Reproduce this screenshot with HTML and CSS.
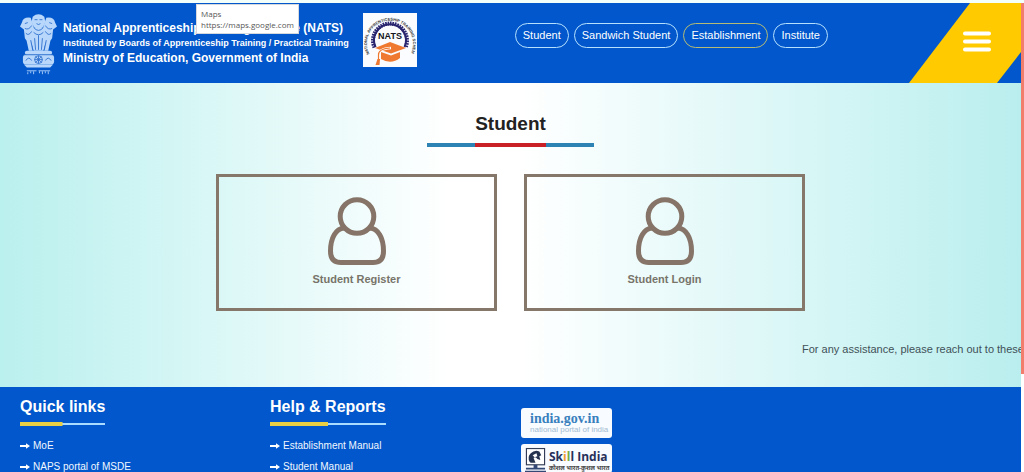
FILE: index.html
```html
<!DOCTYPE html>
<html lang="en">
<head>
<meta charset="utf-8">
<title>NATS - Student</title>
<link rel="stylesheet" href="styles.css">
</head>
<body>
<svg class="symbols" aria-hidden="true">
  <symbol id="user" viewBox="0 0 58 68">
    <circle cx="29" cy="19.500" r="16.800"/>
    <path d="M16 31C8 31.500 2.500 41 2.500 54Q2.500 65.500 13 65.500H45Q55.500 65.500 55.500 54C55.500 41 50 31.500 42 31"/>
  </symbol>
  <symbol id="arrow" viewBox="0 0 10 8">
    <path d="M0 3H6V1.200L10 4L6 6.800V5H0Z"/>
  </symbol>
</svg>
<div class="page">
  <div class="site">
    <header class="header">
      <a class="brand" href="#">
        <svg class="emblem" viewBox="0 0 38 64" role="img" aria-label="State Emblem of India">
          <g fill="#b9d7fb">
            <path d="M13 3Q19-2 25 3L26 8Q25 14 19 16Q13 14 12 8Z"/>
            <path d="M11 4Q3 3 2 9L0 13L4 16L5 25Q8 31 12 25L15 16Z"/>
            <path d="M27 4Q35 3 36 9L38 13L34 16L33 25Q30 31 26 25L23 16Z"/>
            <path d="M12 14L26 14L27 27L24 38H14L11 27Z"/>
            <path d="M6 24H11L13 38H9ZM32 24H27L25 38H29Z"/>
            <rect x="5" y="38" width="28" height="4" rx="2"/>
            <rect x="3" y="42" width="32" height="10" rx="3"/>
            <path d="M4 52H34L31 55H7Z"/>
          </g>
          <g fill="none" stroke="#2d6fce" stroke-width=".9">
            <path d="M15 6H18M20 6H23M17 10Q19 12 21 10M14 14Q19 20 24 14M14 19Q19 24 24 19M15 25L16 37M19 22V37M23 25L22 37M5 10L8 9M33 10L30 9M5 15Q9 17 12 12M33 15Q29 17 26 12M6 20Q9 23 12 18M32 20Q29 23 26 18M11 27L13 37M27 27L25 37M4 42H34"/>
            <circle cx="19" cy="47" r="4"/>
            <path d="M15 47H23M19 43V51M16 44L22 50M22 44L16 50M6 48Q9 43 12 48M26 48Q29 43 32 48"/>
          </g>
          <path d="M7 58.500H17M19 58.500H31M8 60V62M11 59V61M14 59V62M20 59V61M23 59V62M26 59V61M29 59V62" stroke="#a6cbfa" stroke-width="1" fill="none"/>
        </svg>
        <span class="brand-text">
          <span class="brand-line">National Apprenticeship Training Scheme (NATS)</span>
          <span class="brand-line brand-small">Instituted by Boards of Apprenticeship Training / Practical Training</span>
          <span class="brand-line">Ministry of Education, Government of India</span>
        </span>
        <svg class="nats" viewBox="0 0 54 54" role="img" aria-label="NATS">
          <rect width="54" height="54" fill="#fafcff"/>
          <defs><path id="ring" d="M6.500 41A23 23 0 1 1 47.500 41"/></defs>
          <text class="ring-text"><textPath href="#ring">NATIONAL APPRENTICESHIP TRAINING SCHEME</textPath></text>
          <path d="M11.500 34.500A17 17 0 1 1 42.500 34.500" fill="none" stroke="#29256f" stroke-width="4" stroke-dasharray="1.600 .8"/>
          <path d="M12.500 34A16 16 0 1 1 41.500 34" fill="none" stroke="#29256f" stroke-width="2"/>
          <text class="nats-text" x="27" y="26">NATS</text>
          <path d="M12 35L27 29L43 35L28 40.500Z" fill="#ef7930"/>
          <path d="M18 39L28 42.500L37 39V45Q28 52 18 46Z" fill="#ef7930"/>
          <path d="M28 35Q15 36 15.500 42V47" fill="none" stroke="#fff" stroke-width="2.400"/>
          <path d="M27 35Q15 36 15.500 42V47" fill="none" stroke="#ef7930" stroke-width="1.200"/>
          <path d="M14.500 46H17L16.500 52H12.500Z" fill="#ef7930"/>
        </svg>
      </a>
      <nav class="nav" aria-label="Main">
        <a href="#">Student</a>
        <a href="#">Sandwich Student</a>
        <a class="active" href="#">Establishment</a>
        <a href="#">Institute</a>
      </nav>
      <button class="menu" type="button" aria-label="Menu">
        <svg viewBox="0 0 28 21"><path d="M2 2.500H26M2 10.500H26M2 18.500H26"/></svg>
      </button>
      <div class="link-tip" role="tooltip">Maps<br>https://maps.google.com</div>
    </header>
    <main class="main">
      <h1>Student</h1>
      <div class="cards">
        <a class="card" href="#"><svg class="user"><use href="#user"/></svg>Student Register</a>
        <a class="card" href="#"><svg class="user"><use href="#user"/></svg>Student Login</a>
      </div>
      <p class="notice">For any assistance, please reach out to these</p>
    </main>
    <footer class="footer">
      <section>
        <h2>Quick links</h2>
        <ul>
          <li><a href="#"><svg class="arrow"><use href="#arrow"/></svg>MoE</a></li>
          <li><a href="#"><svg class="arrow"><use href="#arrow"/></svg>NAPS portal of MSDE</a></li>
        </ul>
      </section>
      <section>
        <h2>Help &amp; Reports</h2>
        <ul>
          <li><a href="#"><svg class="arrow"><use href="#arrow"/></svg>Establishment Manual</a></li>
          <li><a href="#"><svg class="arrow"><use href="#arrow"/></svg>Student Manual</a></li>
        </ul>
      </section>
      <section class="partners">
        <a class="partner india" href="#"><span class="india-name">india.gov.in</span><span class="india-sub">national portal of india</span></a>
        <a class="partner skill" href="#">
          <svg class="skill-icon" viewBox="0 0 22 26" aria-hidden="true">
            <rect x="1.500" y="1" width="19" height="17" fill="#fff" stroke="#333c55" stroke-width="1.200"/>
            <path d="M5 15Q2 10 6 6Q10 2 15 4L17 8L15 9L16 13L13 12Q11 9 9 11L11 16H6Z" fill="#26334f"/>
            <path d="M8 8L12 6L13 9L10 10Z" fill="#fff"/>
            <path d="M9 18H13V21H21V23H1V21H9Z" fill="#344876"/>
            <path d="M0 25H22" stroke="#344876" stroke-width="1.500"/>
          </svg>
          <span class="skill-text">
            <span class="skill-name">Sk<span class="orange">i</span><span class="green">l</span>l India</span>
            <span class="skill-sub" lang="hi">कौशल भारत-कुशल भारत</span>
          </span>
        </a>
      </section>
    </footer>
  </div>
  <div class="scroll-track" aria-hidden="true"><div class="scroll-thumb"></div></div>
</div>
</body>
</html>
```
FILE: styles.css
```css
* { box-sizing: border-box; }
body {
  margin: 0;
  font-family: "Liberation Sans", Arial, sans-serif;
  background: #f2fffb;
}
a { color: inherit; text-decoration: none; }
.symbols { position: absolute; width: 0; height: 0; }
.page {
  display: flex;
  height: 100vh;
  padding-top: 3px;
  overflow: hidden;
}
.site {
  display: flex;
  flex: 1;
  flex-direction: column;
  min-width: 0;
  overflow: hidden;
}
.scroll-track { flex: 0 0 3px; background: #fff; }
.scroll-thumb { height: 79%; background: #f27d6c; }

.header {
  position: relative;
  display: flex;
  flex: none;
  align-items: flex-start;
  height: 80px;
  padding-left: 20px;
  color: #fff;
  background: #0157cb;
}
.brand { display: flex; gap: 6px; padding-top: 10px; }
.emblem { width: 37px; height: 64px; }
.brand-text {
  display: flex;
  flex-direction: column;
  width: 294px;
  padding-top: 7px;
  font: 700 12px/16px "Liberation Sans", Arial, sans-serif;
  white-space: nowrap;
}
.brand-small { font-size: 9px; line-height: 14px; }
.nats { width: 54px; height: 54px; }
.ring-text { font: 700 4px "Liberation Sans", sans-serif; fill: #333; }
.nats-text { font: 700 9px "Liberation Sans", sans-serif; fill: #15151d; text-anchor: middle; }
.nav { display: flex; gap: 5px; margin-left: auto; padding-top: 20px; }
.nav a {
  padding: 0 7px;
  border: 1px solid #b5e1ff;
  border-radius: 13px;
  font-size: 11px;
  line-height: 23px;
  white-space: nowrap;
}
.nav .active { border-color: #b5bb75; }
.menu {
  flex: none;
  width: 112px;
  height: 80px;
  margin-left: 81px;
  padding: 0 0 0 24px;
  border: 0;
  background: #ffca00;
  clip-path: polygon(61px 0, 100% 0, 100% 49px, 88px 100%, 0 100%);
}
.menu svg { width: 28px; height: 21px; fill: none; stroke: #fff; stroke-width: 4; stroke-linecap: round; }
.link-tip {
  position: absolute;
  top: 1px;
  left: 196px;
  padding: 3px 4px;
  border: 1px solid #d5d9de;
  color: #575757;
  background: #fff;
  font: 8px/11px "Open Sans", "Noto Sans", sans-serif;
}

.main {
  flex: none;
  padding: 30px 0;
  background: linear-gradient(90deg, #baf0ee 0%, #d8f7f6 20%, #fff 44%, #fff 51%, #d8f6f6 79%, #baeeee 100%);
}
h1 {
  width: 167px;
  margin: 0 auto 27px;
  padding-bottom: 8px;
  border-bottom: 4px solid;
  border-image: linear-gradient(90deg, #2d84b4 30%, #c82024 30%, #c82024 70%, #2d84b4 70%) 4;
  color: #222;
  font-size: 19px;
  line-height: 22px;
  text-align: center;
}
.cards { display: flex; justify-content: center; gap: 27px; }
.card {
  display: flex;
  flex-direction: column;
  align-items: center;
  gap: 7px;
  width: 281px;
  padding: 20px 0 22px;
  border: 3px solid #85786a;
  color: #777469;
  font-size: 11px;
  font-weight: 700;
  line-height: 14px;
}
.user { width: 58px; height: 68px; fill: none; stroke: #857467; stroke-width: 5; }
.notice {
  margin: 30px 0 0;
  padding-left: 802px;
  color: #3f5158;
  font-size: 11px;
  line-height: 16px;
  white-space: nowrap;
}

.footer {
  display: grid;
  flex: 1 0 auto;
  grid-template-columns: 250px 250px 1fr;
  padding: 10px 20px 0;
  color: #f1f8ff;
  background: #0157cb;
}
h2 {
  display: flow-root;
  width: max-content;
  margin: 0 0 13px;
  color: #fff;
  font-size: 16px;
  line-height: 19px;
}
h2::after {
  display: block;
  height: 4px;
  margin-top: 6px;
  background:
    linear-gradient(#e8cf43, #e8cf43) 0 0 / 50% 4px no-repeat,
    linear-gradient(#a9dcff, #a9dcff) 0 1px / 100% 2px no-repeat;
  content: "";
}
ul { display: grid; gap: 7px; margin: 0; padding: 0; list-style: none; }
li a { display: flex; align-items: center; gap: 3px; font-size: 10px; line-height: 14px; }
.arrow { width: 10px; height: 8px; fill: #fff; }
.partners { display: flex; flex-direction: column; align-items: flex-start; gap: 6px; padding: 11px 0 0 1px; }
.partner { width: 91px; border-radius: 3px; background: #f8fbff; white-space: nowrap; }
.india { display: flex; flex-direction: column; padding: 3px 0 4px 9px; }
.india-name { color: #3880bd; font: 700 14px/15px "Liberation Serif", serif; }
.india-sub { color: #a4bbd3; font-size: 8px; line-height: 8px; }
.skill { display: flex; gap: 3px; padding: 3px 0 0 4px; }
.skill-icon { flex: none; width: 21px; height: 26px; }
.skill-text { display: flex; flex-direction: column; padding-top: 3px; }
.skill-name { color: #273059; font: 700 12px/14px "Open Sans", sans-serif; }
.skill-sub { color: #444; font: 700 6px/9px "Noto Sans", "Noto Sans Devanagari", sans-serif; }
.orange { color: #ef9e32; }
.green { color: #78ad3c; }
```
